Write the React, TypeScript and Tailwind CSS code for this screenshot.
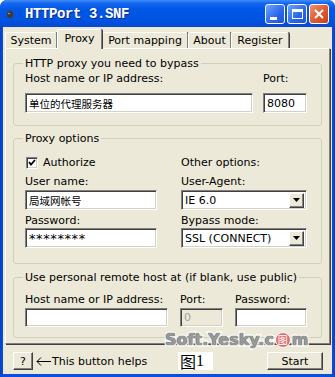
import React from "react";

const raised =
  "border border-t-white border-l-white border-r-[#404040] border-b-[#404040] shadow-[inset_-1px_-1px_0_#808080] bg-[#ece9d8]";
const sunken =
  "border border-t-[#808080] border-l-[#808080] border-r-white border-b-white shadow-[inset_1px_1px_0_#404040,inset_-1px_-1px_0_#d4d0c8]";

function Field({ cls, children }: { cls: string; children?: React.ReactNode }) {
  return (
    <div className={`${sunken} flex items-center pl-[3px] overflow-hidden whitespace-nowrap ${cls}`}>
      {children}
    </div>
  );
}

function Select({ value }: { value: string }) {
  return (
    <div className={`${sunken} bg-white h-[20px] flex items-center pl-[3px] pr-[2px]`}>
      <span className="flex-1">{value}</span>
      <div className={`${raised} w-[15px] h-[15px] flex items-center justify-center`}>
        <svg width="7" height="4" viewBox="0 0 7 4">
          <path d="M0 0h7L3.5 4z" fill="#000" />
        </svg>
      </div>
    </div>
  );
}

function Tab({ cls, label, selected }: { cls: string; label: string; selected?: boolean }) {
  if (selected) {
    return (
      <div
        className={`${cls} relative z-10 h-[20px] -mb-px bg-[#ece9d8] border-t border-l border-t-white border-l-white border-r border-r-[#808080] shadow-[1px_0_0_#404040] rounded-t-[2px] flex items-start justify-center pt-[2px]`}
      >
        {label}
      </div>
    );
  }
  return (
    <div
      className={`${cls} h-[16px] bg-[#ece9d8] border-t border-l border-t-white border-l-white border-r border-r-[#808080] shadow-[1px_0_0_#404040] rounded-t-[2px] flex items-center justify-center`}
    >
      {label}
    </div>
  );
}

function Group({ title, children, cls }: { title: string; children: React.ReactNode; cls: string }) {
  return (
    <fieldset className={`border border-[#d0d0bf] rounded-[3px] pl-[11px] pr-[14px] ${cls}`}>
      <legend className="-ml-[2px] px-[2px] leading-[13px] whitespace-nowrap">{title}</legend>
      {children}
    </fieldset>
  );
}

export default function App() {
  return (
    <div className="relative w-[335px] h-[377px] overflow-hidden rounded-t-[7px] bg-[linear-gradient(to_right,#0a3fc8,#0a50dc_1%,#0a50dc_99%,#0a3fc8)] font-['DejaVu_Sans',sans-serif] text-[11px] leading-[13px] text-black flex flex-col">
      {/* Title bar */}
      <div className="h-[27px] shrink-0 flex items-center pl-[5px] pr-[6px] bg-[linear-gradient(to_bottom,#3d8cf7_0%,#1667ef_12%,#0057e6_35%,#0054e2_75%,#0848d2_100%)]">
        <svg width="10" height="10" viewBox="0 0 10 10" className="shrink-0">
          <path d="M2 1l2 2M8 1L6 3M0 5h2M8 5h2M1 9l2-2M9 9L7 7" stroke="#4a4a4a" strokeWidth="1" />
          <ellipse cx="5" cy="5.5" rx="3" ry="3.5" fill="#3a3a3a" />
          <circle cx="4" cy="4.5" r="0.8" fill="#bbb" />
        </svg>
        <span className="ml-[10px] font-['Liberation_Mono',monospace] font-bold text-[14px] leading-[16px] tracking-[-0.4px] text-white [text-shadow:1px_1px_0_#0a2a8a]">
          HTTPort 3.SNF
        </span>
        <div className="ml-auto flex gap-[2px]">
          <div className="w-[20px] h-[20px] rounded-[3px] border border-white bg-[linear-gradient(135deg,#6aa6ff,#2a66e8_60%,#1f55d6)] relative flex items-end pl-[4px] pb-[3px]">
            <div className="w-[7px] h-[3px] bg-white" />
          </div>
          <div className="w-[20px] h-[20px] rounded-[3px] border border-white bg-[linear-gradient(135deg,#6aa6ff,#2a66e8_60%,#1f55d6)] flex items-center justify-center">
            <div className="w-[11px] h-[10px] border border-white border-t-[3px]" />
          </div>
          <div className="w-[20px] h-[20px] rounded-[3px] border border-white bg-[linear-gradient(135deg,#f09070,#e0582e_55%,#c8401c)] flex items-center justify-center">
            <svg width="10" height="10" viewBox="0 0 10 10">
              <path d="M1 1l8 8M9 1l-8 8" stroke="#fff" strokeWidth="2" />
            </svg>
          </div>
        </div>
      </div>

      {/* Body */}
      <div className="flex-1 mx-[3px] mb-[3px] bg-[#ece9d8] flex flex-col">
        {/* Tabs */}
        <div className="h-[21px] shrink-0 flex items-end pl-[2px]">
          <Tab cls="w-[52px]" label="System" />
          <Tab cls="w-[45px]" label="Proxy" selected />
          <Tab cls="w-[86px]" label="Port mapping" />
          <Tab cls="w-[43px]" label="About" />
          <Tab cls="w-[58px]" label="Register" />
        </div>

        {/* Panel */}
        <div className="mx-[2px] h-[296px] shrink-0 border border-t-white border-l-white border-r-[#808080] border-b-[#808080] shadow-[1px_1px_0_#404040] px-[7px] flex flex-col">
          <Group title="HTTP proxy you need to bypass" cls="mt-[8px] pt-[2px] pb-[12px]">
            <div className="flex justify-between">
              <span>Host name or IP address:</span>
              <span className="w-[44px]">Port:</span>
            </div>
            <div className="flex justify-between mt-[8px]">
              <Field cls="w-[228px] h-[20px] bg-white font-['Noto_Sans_CJK_SC',sans-serif] text-[10.5px]">
                单位的代理服务器
              </Field>
              <Field cls="w-[44px] h-[20px] bg-white">8080</Field>
            </div>
          </Group>

          <Group title="Proxy options" cls="mt-[6px] pt-[11px] pb-[15px]">
            <div className="grid grid-cols-[132px_126px] justify-between">
              <div className="flex flex-col">
                <div className="flex items-center h-[13px]">
                  <div className={`${sunken} ml-[1px] w-[12px] h-[12px] bg-white flex items-center justify-center`}>
                    <svg width="8" height="7" viewBox="0 0 8 7">
                      <path d="M1 3l2 2.5L7 1" stroke="#000" strokeWidth="1.8" fill="none" />
                    </svg>
                  </div>
                  <span className="ml-[5px]">Authorize</span>
                </div>
                <span className="mt-[6px]">User name:</span>
                <Field cls="mt-[2px] h-[20px] bg-white font-['Noto_Sans_CJK_SC',sans-serif] text-[10.5px]">
                  局域网帐号
                </Field>
                <span className="mt-[4px]">Password:</span>
                <Field cls="mt-[1px] h-[20px] bg-white text-[13px] tracking-[0.6px]">********</Field>
              </div>
              <div className="flex flex-col">
                <span className="h-[13px]">Other options:</span>
                <span className="mt-[6px]">User-Agent:</span>
                <div className="mt-[2px]">
                  <Select value="IE 6.0" />
                </div>
                <span className="mt-[4px]">Bypass mode:</span>
                <div className="mt-[1px]">
                  <Select value="SSL (CONNECT)" />
                </div>
              </div>
            </div>
          </Group>

          <Group title="Use personal remote host at (if blank, use public)" cls="mt-[7px] pt-[9px] pb-[10px]">
            <div className="grid grid-cols-[143px_43px_72px] justify-between">
              <span>Host name or IP address:</span>
              <span>Port:</span>
              <span>Password:</span>
              <Field cls="mt-[2px] h-[19px] bg-white" />
              <Field cls="mt-[2px] h-[19px] bg-[#ece9d8] text-[#a0a0a0]">0</Field>
              <Field cls="mt-[2px] h-[19px] bg-white" />
            </div>
          </Group>
        </div>

        {/* Bottom row */}
        <div className="mt-[8px] flex items-center pl-[10px] pr-[9px]">
          <div className={`${raised} w-[20px] h-[18px] flex items-center justify-center`}>?</div>
          <div className="ml-[3px] w-[142px] flex items-center">
            <svg width="15" height="9" viewBox="0 0 15 9" className="shrink-0">
              <path d="M1 4.5h14M5 0.5L1 4.5l4 4" stroke="#000" strokeWidth="1" fill="none" />
            </svg>
            <span className="ml-[1px]">This button helps</span>
          </div>
          <div className="w-[35px] h-[18px] bg-white flex items-center pl-[2px] text-[16px] leading-[18px] font-['Noto_Sans_CJK_SC',sans-serif]">
            图<span className="font-['Liberation_Serif',serif]">1</span>
          </div>
          <div className={`${raised} ml-auto w-[56px] h-[18px] flex items-center justify-center`}>Start</div>
        </div>
      </div>

      {/* Watermark overlay */}
      <div className="absolute left-[165px] top-[331px] flex items-center font-['DejaVu_Sans',sans-serif] font-bold text-[16px] leading-[18px] text-[#9a9a9a] [-webkit-text-stroke:3px_#ffffff] [paint-order:stroke_fill] [text-shadow:0_0_1px_#555,0_0_1px_#555]">
        <span>Soft.Yesky.c</span>
        <span className="mx-[1px] w-[16px] h-[16px] rounded-full bg-[#e07070] border border-white flex items-center justify-center text-[10px] leading-[10px] text-white [-webkit-text-stroke:0px_#ffffff] [text-shadow:none] font-['Noto_Sans_CJK_SC',sans-serif] font-normal">
          图
        </span>
        <span>m</span>
      </div>
    </div>
  );
}
